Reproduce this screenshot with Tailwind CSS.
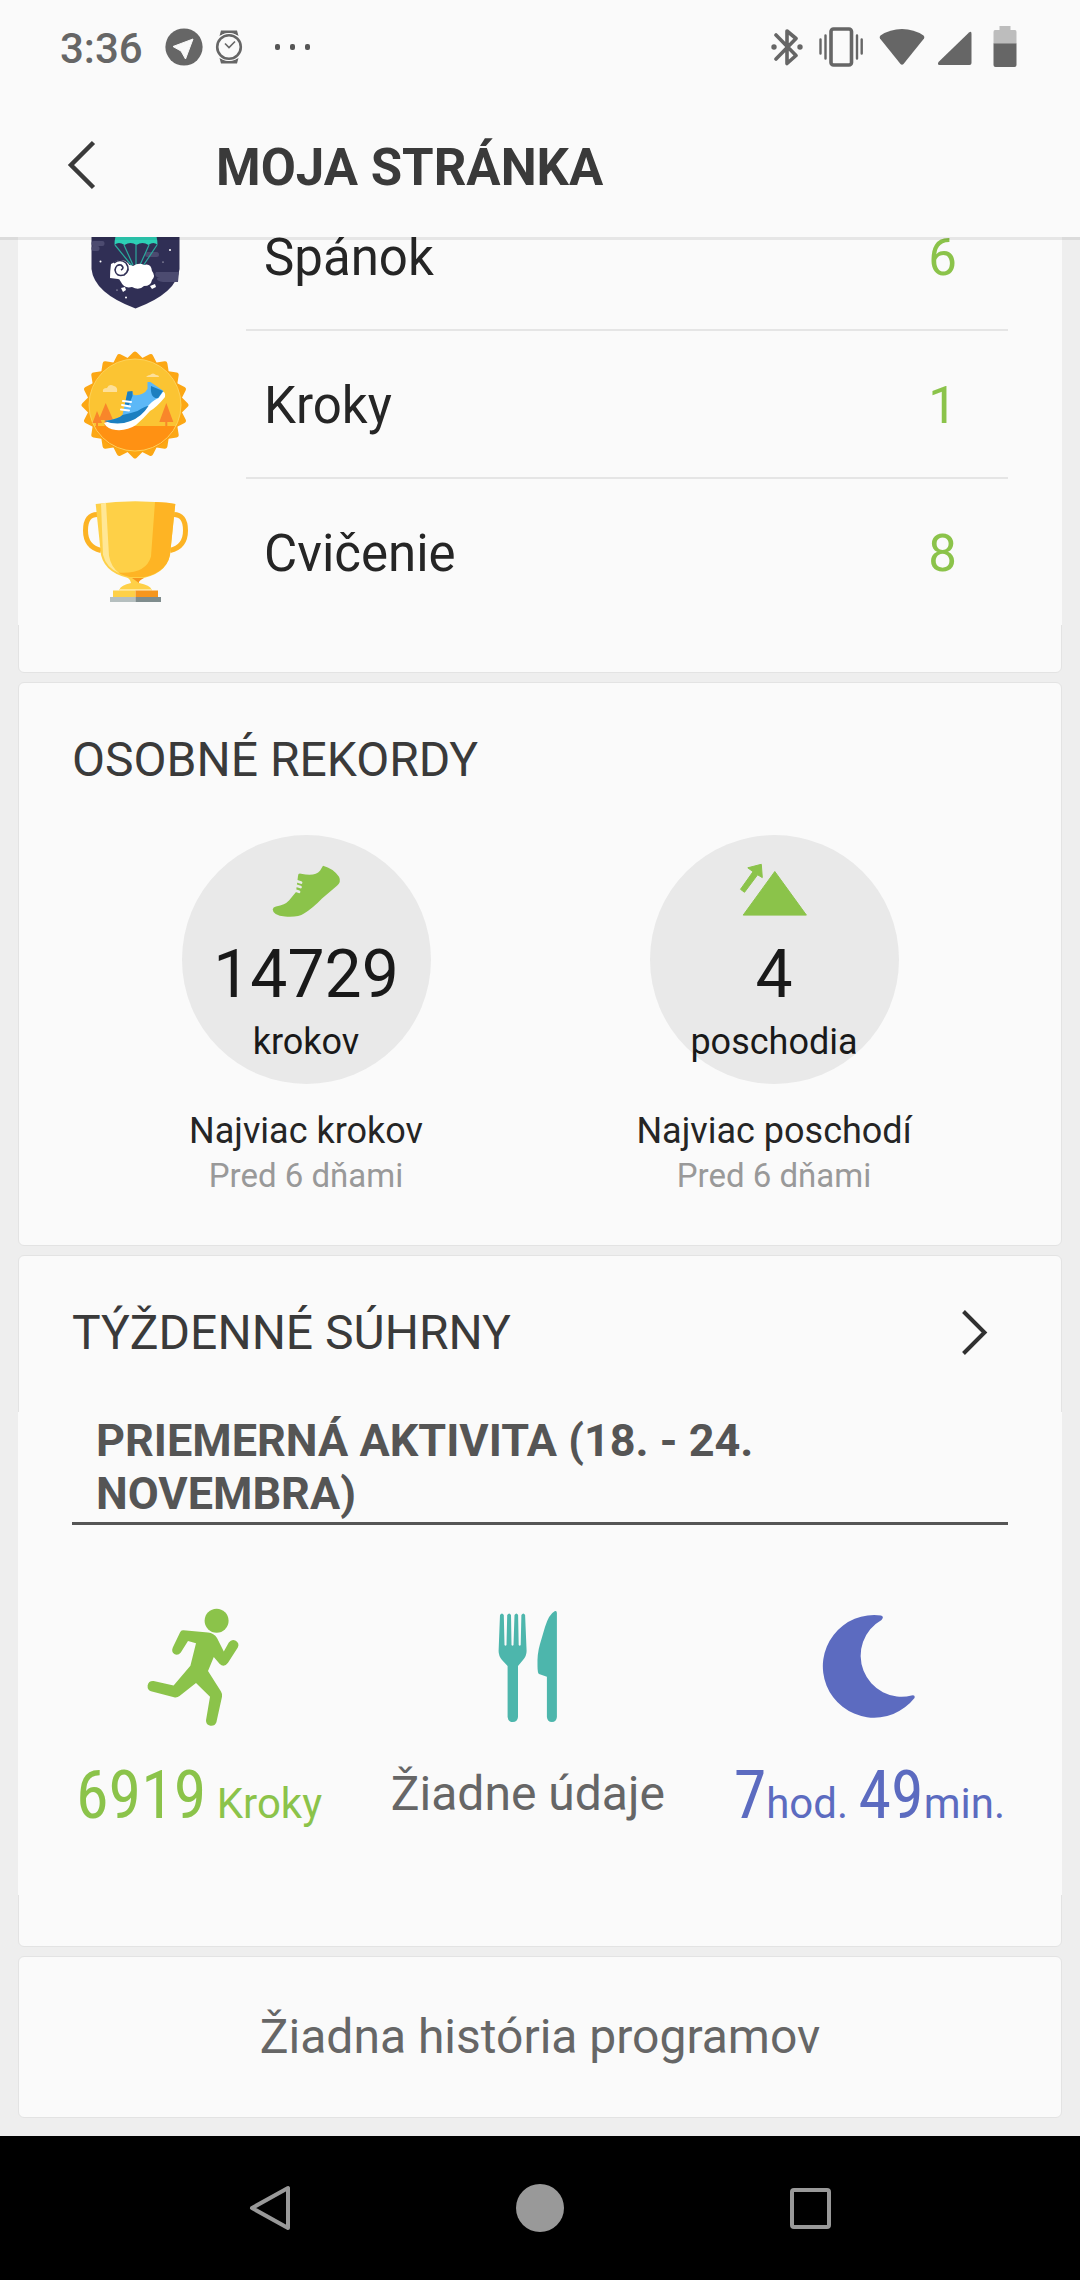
<!DOCTYPE html>
<html lang="sk">
<head>
  <meta charset="UTF-8" />
  <meta name="viewport" content="width=device-width, initial-scale=1.0"/>
  <title>Moja stránka</title>
  <script src="https://cdn.jsdelivr.net/npm/@tailwindcss/browser@4"></script>
</head>
<body class="bg-[#eeeeee] font-['Roboto',sans-serif] text-[#252525]">
  <div class="h-screen flex flex-col overflow-hidden">

    <header class="relative z-10 shrink-0 bg-[#fafafa] shadow-[0_3px_0_rgba(0,0,0,0.08)]">
      <!-- Status bar -->
      <div class="h-[93px] pl-[60px] pr-[63px] flex items-center justify-between text-[#666666]">
        <div class="flex items-center">
          <span class="pt-1 text-[42px] leading-[48px] font-medium">3:36</span>
          <svg class="ml-[22px] w-[38px] h-[38px]" viewBox="0 0 38 38">
            <circle cx="19" cy="19" r="18.6" fill="#666666"/>
            <path d="M28 11 8 18.500l8 4.500L20.500 31Z" fill="#fafafa" stroke="#fafafa" stroke-linejoin="round"/>
          </svg>
          <svg class="ml-3 w-[28px] h-[36px]" viewBox="0 0 28 36" fill="none" stroke="#666666">
            <path d="M6 1.500h16l1.500 5.500q-9.500-6-19 0ZM6 34.500h16l1.500-5.500q-9.500 6-19 0Z" fill="#666666" stroke="none"/>
            <circle cx="14" cy="18" r="14" fill="#fafafa" stroke="none"/>
            <circle cx="14" cy="18" r="11.800" stroke-width="2.600"/>
            <path d="m10 14.500 4 4 6-6" stroke-width="1.600"/>
          </svg>
          <svg class="ml-8 w-[38px] h-[8px]" viewBox="0 0 38 8" fill="#555555">
            <rect x="0" y="1" width="5" height="6" rx="2"/><rect x="15" y="1" width="5" height="6" rx="2"/><rect x="30" y="1" width="5" height="6" rx="2"/>
          </svg>
        </div>
        <div class="flex items-center">
          <svg class="w-[32px] h-[38px]" viewBox="0 0 32 38" fill="none" stroke="#666666" stroke-width="3.600">
            <path d="m5 7 20 20.500-9 8V3l9 7.500L5 31" stroke-linejoin="round" stroke-linecap="round"/>
            <circle cx="3" cy="19" r="2.700" fill="#666666" stroke="none"/><circle cx="29" cy="19" r="2.700" fill="#666666" stroke="none"/>
          </svg>
          <svg class="ml-4 w-[44px] h-[40px]" viewBox="0 0 44 40" fill="none" stroke="#666666">
            <rect x="12" y="2" width="20.500" height="36" rx="2.500" stroke-width="3.600"/>
            <path d="M1.500 12.500v14M6.500 8.500v23M38 8.500v23M42.700 12.500v14" stroke-width="2.400" stroke-linecap="round"/>
          </svg>
          <svg class="ml-4 w-[46px] h-[38px]" viewBox="0 0 46 38" fill="#666666">
            <path d="M23 1Q35 1 44.500 7.500 46 9 45 10.500L24.500 36Q23 37.500 21.500 36L1 10.500Q0 9 1.500 7.500 11 1 23 1Z"/>
          </svg>
          <svg class="ml-3 w-[36px] h-[38px]" viewBox="0 0 36 38" fill="#666666">
            <path d="M32 4.500Q34.500 2.500 34.500 6v29q0 2-2 2H2.500Q0 37 1.500 34Z"/>
          </svg>
          <svg class="ml-5 w-[24px] h-[42px]" viewBox="0 0 24 42">
            <path d="M6.500 0h11v4H22q1.500 0 1.500 2v12H.5V6q0-2 1.500-2h4.500Z" fill="#bdbdbd"/>
            <path d="M.5 17.500h23V39q0 2-2 2h-19q-2 0-2-2Z" fill="#666666"/>
          </svg>
        </div>
      </div>
      <!-- Title bar -->
      <div class="h-[144px] pl-[60px] pt-1 flex items-center">
        <button aria-label="Späť" class="w-[156px] pb-1">
          <svg class="w-[40px] h-[56px]" viewBox="0 0 40 56" fill="none" stroke="#3a3a3a" stroke-width="4.500"><path d="M33.500 5.500 11 28l22.500 22.500"/></svg>
        </button>
        <h1 class="pt-0.5 text-[51px] leading-[60px] font-bold text-[#3a3a3a]">MOJA STRÁNKA</h1>
      </div>
    </header>

    <main class="flex-1 min-h-0 overflow-hidden flex flex-col justify-end gap-[9px] px-[18px] pb-[18px]">

      <!-- Rewards -->
      <section class="shrink-0 bg-[#fafafa] border border-[#e3e3e3] rounded-[6px] pb-[47px]">
        <ul class="-mx-px bg-[#fafafa] pl-[63px] pr-[54px] text-[51px] leading-[60px]">
          <li class="flex items-center">
            <svg class="w-[108px] h-[108px]" viewBox="0 0 108 108">
              <path d="M10.500 8h88v58Q96 90 54.500 105.500 13 90 10.500 66Z" fill="#302f55"/>
              <g fill="#4c4b70">
                <rect x="10.500" y="38" width="13" height="5" rx="2"/><rect x="10.500" y="43" width="8" height="5" rx="2"/>
                <rect x="64" y="49" width="14" height="5" rx="2.500"/><path d="M75 69h23l-1 10H82q-6-1-6-3t3-2h-3q-3-2-1-5Z"/>
              </g>
              <path d="M33.500 42q0-22 21.500-22t21.500 22q-4-4-9 0-6-4-12 0-6-4-12 0-6-4-10 0Z" fill="#2dd0b6"/>
              <path d="m34 42 17 21m-8-21 9 20m3-21v21m13-20-9 20m17-20L62 63" fill="none" stroke="#2aa99c" stroke-width="1.200"/>
              <g fill="#fff">
                <path d="M42 66q4-6 10-3 6-4 11-1 7-2 8 6 4 5 0 9-1 6-8 6-5 5-12 1-8 2-11-5-4-4 2-13Z"/>
                <path d="M32 60q8-6 15 0 6 7-1 13-4 5-9 3l-8-1q0-7 1-14Z"/>
                <path d="m40 85 4-1 1 3-3 2ZM69 83l5-2 1 3-4 2Z"/>
                <circle cx="19.500" cy="58.500" r="1"/><circle cx="89" cy="47" r="1"/><circle cx="45" cy="94.500" r="1"/><circle cx="82" cy="59" r=".6"/><circle cx="36" cy="87" r=".6"/>
              </g>
              <path d="M33 60q6-5 12 0 5 7-2 12-8 2-9-5 1-6 6-5 4 3 0 5" fill="none" stroke="#302f55" stroke-width="1.600"/>
            </svg>
            <div class="ml-[57px] flex-1 h-[148px] border-b-2 border-[#e5e5e5] pt-1 pl-[18px] pr-[51px] flex items-center justify-between">
              <span>Spánok</span><span class="text-[#8bc34a]">6</span>
            </div>
          </li>
          <li class="flex items-center">
            <svg class="w-[108px] h-[108px]" viewBox="0 0 108 108">
              <g fill="#fca714" stroke="#fca714" stroke-width="5" stroke-linejoin="round">
                <rect x="18" y="18" width="72" height="72" transform="rotate(45 54 54)"/>
                <rect x="18" y="18" width="72" height="72" transform="rotate(63 54 54)"/>
                <rect x="18" y="18" width="72" height="72" transform="rotate(81 54 54)"/>
                <rect x="18" y="18" width="72" height="72" transform="rotate(99 54 54)"/>
                <rect x="18" y="18" width="72" height="72" transform="rotate(117 54 54)"/>
              </g>
              <circle cx="54" cy="54" r="46" fill="#fbc433"/>
              <path d="M13 75h82Q84 100 54 100T13 75Z" fill="#ff9113"/>
              <circle cx="54" cy="54" r="46" fill="none" stroke="#fdd25a" stroke-width="1"/>
              <path d="M22 41q-1-4 4-4 2-5 7-2 4 1 3 6ZM65 26q2-2 4-2 3-3 6 0 3 0 3 2Z" fill="#fde09a"/>
              <path d="m24.700 52 7.500 17h-6v6h-2.500v-6h-6ZM16 60l5 12h-4v3h-2v-3h-3.500ZM85.300 52l7 19h-6v4h-2v-4h-6Z" fill="#f9862a"/>
              <path d="M23 72q4-2 13-1l17-5 27-25q5-1 4 5-8 10-15 14-6 7-14 14-9 6-20 5-9-1-12-7Z" fill="#fff"/>
              <path d="M23.500 70q14-2 18-6l5-23h5l1 3q10 1 14-6v-7l3 0 13 9-5 7q-7 3-12 10-7 9-17 13-12 4-25 0Z" fill="#5cb8f7"/>
              <path d="M23.500 70q14-2 18-6 9-2 15-4 8-5 11-5-7 11-18 15-13 5-26 0ZM46.500 40.500l5-.5 0 5-4 10h-4ZM70 35l12 5-5 7q-8 1-7-12Z" fill="#1c7fc0"/>
              <path d="m42 50 8 1m-9 3 8 1.500m-9 3 8 1" stroke="#fff" stroke-width="2" stroke-linecap="round"/>
            </svg>
            <div class="ml-[57px] flex-1 h-[148px] border-b-2 border-[#e5e5e5] pt-1 pl-[18px] pr-[51px] flex items-center justify-between">
              <span>Kroky</span><span class="text-[#8bc34a]">1</span>
            </div>
          </li>
          <li class="flex items-center">
            <svg class="w-[108px] h-[108px]" viewBox="0 0 108 108">
              <path d="M17 16.500Q4.500 16 4.500 32.500T20 52.500" fill="none" stroke="#fcb324" stroke-width="5"/>
              <path d="M92 16.500q12.500-.5 12.500 16T89 52.500" fill="none" stroke="#fcb324" stroke-width="5"/>
              <path d="M14.700 6Q54 .5 94.300 6L89 57q-4 20-32 24h-4Q25 77 20 57Z" fill="#fed047"/>
              <path d="M74 4q12 0 20.300 2L89 57q-4 20-34 23.500-14-3-18-6 28 2 33-16Z" fill="#feb424"/>
              <path d="M20 5.500l5-.8 3 53q2 12 11 18-14-6-17-19Z" fill="#ffe795"/>
              <path d="M46 79h17q-6 3-5 6 11 2 12.700 6.700H38.300Q40 87 50 85q-1-4-4-6Z" fill="#fed047"/>
              <path d="M51 80h12q-6 3-5 5Z" fill="#f6961e"/>
              <path d="M38 91h33v1.500H38Z" fill="#ffe795"/>
              <path d="M32 92.500h22.500v6.500H32Z" fill="#fed047"/><path d="M54.500 92.500H77v6.500H54.500Z" fill="#f6961e"/>
              <path d="M29 99h25.500v5H29Z" fill="#b5bfbf"/><path d="M54.500 99H80v5H54.500Z" fill="#7f8c8d"/>
            </svg>
            <div class="ml-[57px] flex-1 h-[146px] pt-1 pl-[18px] pr-[51px] flex items-center justify-between">
              <span>Cvičenie</span><span class="text-[#8bc34a]">8</span>
            </div>
          </li>
        </ul>
      </section>

      <!-- Personal records -->
      <section class="shrink-0 bg-[#fafafa] border border-[#e3e3e3] rounded-[6px] px-[53px] pt-[49px] pb-[49px]">
        <h2 class="text-[48px] leading-[56px] text-[#3a3a3a]">OSOBNÉ REKORDY</h2>
        <div class="mt-[47px] grid grid-cols-2 text-center text-[36px] leading-[42px]">
          <div class="flex flex-col items-center">
            <div class="w-[249px] h-[249px] rounded-full bg-[#e9e9e9] pt-7 flex flex-col items-center text-[#191919]">
              <svg class="w-[72px] h-[56px]" viewBox="0 0 72 56">
                <path d="M2.700 46.500Q3 44 6 43.400 15 42 19 37.500L26 29l2-16q0-3 3-2.300 14 3.300 19-3L53 2.700q10 2.500 16 11 2.500 5-2 9L52 35.500Q43 45 34 50.500q-6 4-19 3-12-1-12.300-7Z" fill="#8bc34a"/>
                <path d="m23 17 8 2.500m-8.500 2 8 2.500m-9 2.200 7.500 2.600" stroke="#e9e9e9" stroke-width="2.800" stroke-linecap="round"/>
              </svg>
              <span class="mt-[18px] text-[66px] leading-[76px]">14729</span>
              <span class="mt-2">krokov</span>
            </div>
            <span class="mt-[26px]">Najviac krokov</span>
            <span class="mt-1 text-[33px] leading-[40px] text-[#999999]">Pred 6 dňami</span>
          </div>
          <div class="flex flex-col items-center">
            <div class="w-[249px] h-[249px] rounded-full bg-[#e9e9e9] pt-7 flex flex-col items-center text-[#191919]">
              <svg class="w-[72px] h-[56px]" viewBox="0 0 72 56" fill="#8bc34a" stroke="#8bc34a" stroke-linejoin="round">
                <path d="m36.800 8.500 31.600 43.600H5.200ZM23.300 1.300l1 13.300-4.700-2.800L6.500 29.300l-4-3L15 8.700 9.800 4.800Z"/>
              </svg>
              <span class="mt-[18px] text-[66px] leading-[76px]">4</span>
              <span class="mt-2">poschodia</span>
            </div>
            <span class="mt-[26px]">Najviac poschodí</span>
            <span class="mt-1 text-[33px] leading-[40px] text-[#999999]">Pred 6 dňami</span>
          </div>
        </div>
      </section>

      <!-- Weekly summary -->
      <section class="shrink-0 bg-[#fafafa] border border-[#e3e3e3] rounded-[6px] pb-[51px]">
        <div class="pl-[53px] pr-[60px] pt-[49px] pb-[51px] flex items-center justify-between">
          <h2 class="text-[48px] leading-[56px] text-[#3a3a3a]">TÝŽDENNÉ SÚHRNY</h2>
          <a href="#" aria-label="Týždenné súhrny">
            <svg class="w-[48px] h-[56px]" viewBox="0 0 48 56" fill="none" stroke="#303030" stroke-width="4"><path d="m10.500 6.500 21 21-21 21"/></svg>
          </a>
        </div>
        <div class="-mx-px bg-[#fafafa] px-[54px] pb-[61px]">
          <h3 class="px-6 py-[2px] border-b-3 border-[#555555] text-[45px] leading-[53px] font-bold text-[#555555]">PRIEMERNÁ AKTIVITA (18. - 24. NOVEMBRA)</h3>
          <div class="mt-[83px] pl-1 pr-[3px] flex justify-between text-[42px] leading-[56px]">
            <div class="flex flex-col items-center">
              <svg class="w-[96px] h-[120px] mr-3" viewBox="0 0 96 120" fill="#8bc34a">
                <circle cx="71.600" cy="12.700" r="12"/>
                <path d="M38.500 22.200 63 24.500q6 .5 9 5.500l6.800 13.500 5-9q3-4 7-1.700 4 2.700 2 6.700L83 54.700q-4 5.500-8.500 1L68.800 49 63 63l13 20.500q1.500 2.500 1 5.200l-5.600 25.500q-1.500 4-6 3.500-4.600-1-4.400-5.500L65 88.700 51 75 34.500 88q-2.300 2-5.500 1.300L6 83.200Q2.300 82 2.600 77.500q1-4.800 6-4.400l20 4.400 16.800-19.800L51 35.300 43 33l-7.200 11.500q-3 3.500-6.500 1.500-3.300-2.500-1.500-6.500L35 24.500q1-2.600 3.500-2.300Z"/>
              </svg>
              <p class="mt-[30px] text-[#8bc34a]"><span class="text-[66px] leading-[76px] font-['Roboto_Condensed','Roboto',sans-serif]">6919</span> Kroky</p>
            </div>
            <div class="flex flex-col items-center">
              <svg class="w-[60px] h-[120px]" viewBox="0 0 60 120" fill="#4db6ac">
                <path d="M2 7q2-3 3.800 0L6.500 37q1 1.500 2 0L9.200 7q2-3 3.800 0l.5 30q1 1.500 2 0L16.500 7q2-3 3.600 0l.6 30q1 1.500 2 0l.7-30q2-3 3.700 0L28.600 43q0 5-3.600 9l-5 6v51q-.5 5-5.200 5t-5.200-5V58L4 52Q.6 48 .6 43Z"/>
                <path d="M58.900 5v104q-.5 5-5 5t-5-5V68.700L41 66q-1.500-1-1.500-8Q39 46 42 36l5-17Q51 6 57 3q1.900-.5 1.900 2Z"/>
              </svg>
              <p class="mt-[38px] text-[48px] leading-[56px] text-[#666666]">Žiadne údaje</p>
            </div>
            <div class="flex flex-col items-center">
              <svg class="w-[96px] h-[120px]" viewBox="0 0 96 120" fill="#5c6bc0">
                <path d="M60 7.500q3.500 1 .5 4.500A41 41 0 0 0 90.500 87.500q4-1 3 2.500A51.300 51.300 0 1 1 60 7.500Z"/>
              </svg>
              <p class="mt-[30px] text-[#5c6bc0]"><span class="text-[66px] leading-[76px] font-['Roboto_Condensed','Roboto',sans-serif]">7</span>hod. <span class="text-[66px] leading-[76px] font-['Roboto_Condensed','Roboto',sans-serif]">49</span>min.</p>
            </div>
          </div>
        </div>
      </section>

      <section class="shrink-0 bg-[#fafafa] border border-[#e3e3e3] rounded-[6px] py-[52px]">
        <p class="text-center text-[48px] leading-[56px] text-[#666666]">Žiadna história programov</p>
      </section>
    </main>

    <!-- System navigation -->
    <nav class="shrink-0 h-[144px] px-[12.5%] bg-black grid grid-cols-3 place-items-center">
      <button aria-label="Späť">
        <svg class="w-[48px] h-[48px]" viewBox="0 0 48 48" fill="none" stroke="#999999" stroke-width="4" stroke-linejoin="round"><path d="M42 4v40L6 24Z"/></svg>
      </button>
      <button aria-label="Domov" class="w-12 h-12 rounded-full bg-[#999999]"></button>
      <button aria-label="Prehľad" class="w-[41px] h-[41px] rounded-[4px] border-4 border-[#999999]"></button>
    </nav>
  </div>
</body>
</html>
